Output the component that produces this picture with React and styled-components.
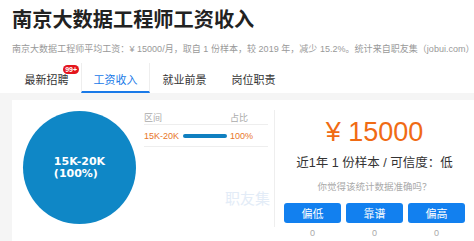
import React from "react";
import styled, { createGlobalStyle } from "styled-components";

const Global = createGlobalStyle`
  html, body { margin: 0; padding: 0; background: #fff; }
  body { font-family: "Liberation Sans", Arial, "Noto Sans CJK SC", sans-serif; }
  * { box-sizing: border-box; }
`;

const Page = styled.div`
  width: 474px;
  height: 241px;
  overflow: hidden;
  background: #fff;
`;

const Header = styled.div`
  padding: 6px 0 0 12px;
`;

const Title = styled.h1`
  margin: 0;
  font-size: 20.2px;
  line-height: 28px;
  font-weight: bold;
  color: #222;
`;

const Sub = styled.p`
  margin: 8px 0 0;
  font-size: 9px;
  line-height: 14px;
  color: #999;
  white-space: nowrap;
  letter-spacing: 0.03px;
`;

const Tabs = styled.div`
  display: flex;
  margin-top: 7px;
  height: 30px;
`;

const Tab = styled.div`
  position: relative;
  width: 69px;
  display: flex;
  align-items: center;
  justify-content: center;
  font-size: 11px;
  color: ${(p) => (p.$active ? "#1a7ae8" : "#333")};
  border-left: 1px solid ${(p) => (p.$active ? "#eee" : "transparent")};
  border-right: 1px solid ${(p) => (p.$active ? "#eee" : "transparent")};
  border-bottom: 2px solid ${(p) => (p.$active ? "#1a7ae8" : "transparent")};
  padding-top: 3px;
`;

const Badge = styled.span`
  position: absolute;
  top: 2px;
  right: 1px;
  background: #e4151d;
  color: #fff;
  font-size: 7px;
  font-weight: bold;
  line-height: 9px;
  padding: 0 2px;
  border-radius: 5px;
`;

const Body = styled.div`
  background: #f5f5f5;
  padding: 7px 0 0 12px;
  height: 148px;
`;

const Panel = styled.div`
  background: #fff;
  height: 141px;
  display: flex;
  position: relative;
`;

const PieWrap = styled.div`
  width: 132px;
  padding: 11px 0 0 11px;
`;

const Pie = styled.div`
  width: 113px;
  height: 113px;
  border-radius: 50%;
  background: #0f87c6;
  display: flex;
  align-items: center;
  justify-content: center;
`;

const PieLabel = styled.div`
  color: #fff;
  font-family: "DejaVu Sans", sans-serif;
  font-weight: bold;
  font-size: 11px;
  line-height: 12px;
  text-align: left;
  margin-top: 1px;
`;

const Table = styled.div`
  width: 124px;
  margin-top: 10px;
`;

const Row = styled.div`
  display: flex;
  align-items: center;
  height: ${(p) => (p.$head ? "15px" : "22px")};
  border-bottom: 1px solid #eee;
  font-size: 9px;
  color: ${(p) => (p.$head ? "#aaa" : "#e8762a")};
`;

const Range = styled.div`
  width: 39px;
`;

const BarCell = styled.div`
  width: 47px;
`;

const Bar = styled.div`
  height: 4px;
  border-radius: 2px;
  background: #0f7fc0;
  width: 44px;
`;

const Pct = styled.div``;

const Watermark = styled.div`
  position: absolute;
  left: 213px;
  top: 87px;
  font-size: 15px;
  color: #e3ecf7;
`;

const Right = styled.div`
  margin-left: 6px;
  margin-top: 10px;
  width: 200px;
  height: 117px;
  border-left: 1px solid #eee;
  display: flex;
  flex-direction: column;
  align-items: center;
`;

const Price = styled.div`
  margin-top: 5px;
  font-size: 27px;
  line-height: 34px;
  color: #f06b14;
`;

const Sample = styled.div`
  margin-top: 6px;
  font-size: 12.5px;
  line-height: 16px;
  color: #333;
`;

const Question = styled.div`
  margin-top: 9px;
  font-size: 9.5px;
  line-height: 14px;
  color: #aaa;
`;

const Votes = styled.div`
  display: flex;
  gap: 5px;
  margin-top: 9px;
`;

const Vote = styled.div`
  display: flex;
  flex-direction: column;
  align-items: center;
`;

const Btn = styled.div`
  width: 57px;
  height: 20px;
  border-radius: 3px;
  background: #1280ef;
  color: #fff;
  font-size: 11px;
  display: flex;
  align-items: center;
  justify-content: center;
`;

const Count = styled.div`
  margin-top: 5px;
  font-size: 9px;
  color: #aaa;
`;

export default function App() {
  return (
    <Page>
      <Global />
      <Header>
        <Title>南京大数据工程师工资收入</Title>
        <Sub>
          南京大数据工程师平均工资：¥ 15000/月，取自 1 份样本，较 2019 年，减少 15.2%。统计来自职友集（jobui.com）
        </Sub>
      </Header>
      <Tabs>
        <Tab style={{ marginLeft: 12 }}>
          最新招聘<Badge>99+</Badge>
        </Tab>
        <Tab $active>工资收入</Tab>
        <Tab>就业前景</Tab>
        <Tab>岗位职责</Tab>
      </Tabs>
      <Body>
        <Panel>
          <PieWrap>
            <Pie>
              <PieLabel>
                15K-20K
                <br />
                (100%)
              </PieLabel>
            </Pie>
          </PieWrap>
          <Table>
            <Row $head>
              <Range>区间</Range>
              <BarCell />
              <Pct>占比</Pct>
            </Row>
            <Row>
              <Range>15K-20K</Range>
              <BarCell>
                <Bar />
              </BarCell>
              <Pct>100%</Pct>
            </Row>
          </Table>
          <Watermark>职友集</Watermark>
          <Right>
            <Price>¥ 15000</Price>
            <Sample>近1年 1 份样本 / 可信度：低</Sample>
            <Question>你觉得该统计数据准确吗？</Question>
            <Votes>
              {["偏低", "靠谱", "偏高"].map((t) => (
                <Vote key={t}>
                  <Btn>{t}</Btn>
                  <Count>0</Count>
                </Vote>
              ))}
            </Votes>
          </Right>
        </Panel>
      </Body>
    </Page>
  );
}
